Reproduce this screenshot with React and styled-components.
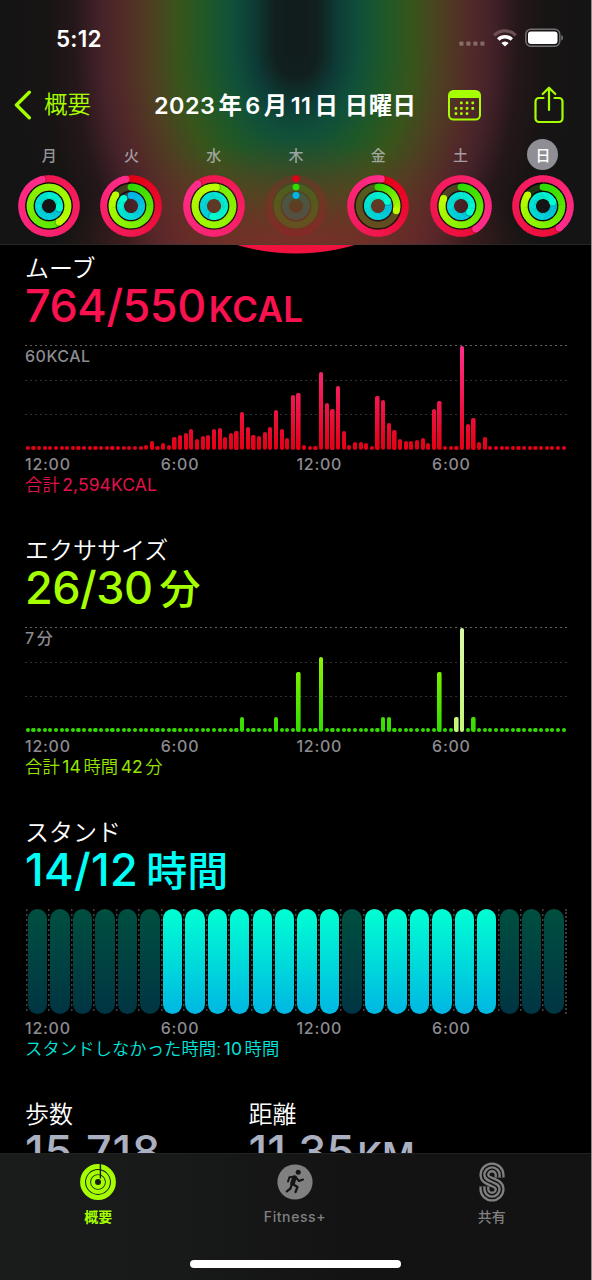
import styled, {createGlobalStyle} from "styled-components"

const GlobalStyle = createGlobalStyle`
    * {
        box-sizing: border-box;
    }

    body {
        margin: 0;
        background: #000;
    }
`

const Screen = styled.div`
    display: flex;
    flex-direction: column;
    width: 592px;
    height: 1280px;
    overflow: hidden;
    background: #000;
    border-right: 1px solid #8a8a8a;
    color: #fff;
    font-family: Inter, "Noto Sans CJK JP", sans-serif;
`

// the blurred rings behind the header: straight bands on top, curved below
const Header = styled.header`
    flex: none;
    display: flex;
    flex-direction: column;
    height: 245px;
    border-bottom: 1px solid rgba(80, 80, 80, 0.3);
    background:
        radial-gradient(ellipse 240px 125px at 296px 265px, rgba(134, 42, 42, 0.9) 0%, rgba(120, 46, 40, 0.6) 45%, rgba(100, 40, 45, 0) 100%),
        radial-gradient(
            ellipse 300px 400px at 296px 0,
            #111c1c 0%,
            #11201f 7%,
            #0d3c36 14%,
            #10503a 21%,
            #1f5827 30%,
            #38551b 39%,
            #4f3e22 49%,
            #522a28 58%,
            #45222a 65%,
            #241719 74%,
            #171414 84%,
            #141414 100%
        ) 0 50px / 100% 195px no-repeat,
        linear-gradient(
            to right,
            #141414 0,
            #171414 44px,
            #241719 74px,
            #45222a 101px,
            #522a28 122px,
            #4f3e22 149px,
            #38551b 179px,
            #1f5827 206px,
            #10503a 233px,
            #0d3c36 254px,
            #11201f 275px,
            #111c1c 296px,
            #11201f 317px,
            #0d3c36 338px,
            #10503a 359px,
            #1f5827 386px,
            #38551b 413px,
            #4f3e22 443px,
            #522a28 470px,
            #45222a 491px,
            #241719 518px,
            #171414 548px,
            #141414 592px
        );
`

const StatusBar = styled.div`
    display: flex;
    align-items: center;
    justify-content: space-between;
    height: 76px;
    padding: 0 27px 0 56px;
`

const Time = styled.span`
    font-size: 22.5px;
    font-weight: 600;
    letter-spacing: 0.2px;
`

const StatusIcons = styled.div`
    display: flex;
    align-items: center;
    gap: 8px;
`

const NavBar = styled.nav`
    display: grid;
    grid-template-columns: 140px 294px 85px 1fr;
    align-items: center;
    height: 58px;
    padding-left: 14px;
`

const BackLink = styled.a`
    display: flex;
    align-items: center;
    gap: 12px;
    color: #a6ff00;
    font-size: 23.5px;
    font-weight: 350;
    line-height: 30px;
`

const PageTitle = styled.h1`
    margin: 0;
    padding-top: 1px;
    display: flex;
    align-items: baseline;
    gap: 3px;
    font-size: 23.4px;
    line-height: 30px;
    font-weight: 600;
    letter-spacing: 0.5px;
    white-space: nowrap;
`

const Week = styled.div`
    display: grid;
    grid-template-columns: repeat(7, 82.3px);
    padding: 5px 0 0 8px;
`

const Day = styled.div`
    display: flex;
    flex-direction: column;
    align-items: center;
    gap: 5px;
`

const DayName = styled.span`
    display: flex;
    align-items: center;
    justify-content: center;
    width: 31px;
    height: 31px;
    border-radius: 50%;
    background: ${props => props.$active ? "#8f8e94" : "transparent"};
    color: ${props => props.$active ? "#fff" : "rgba(200, 200, 208, 0.72)"};
    font-size: 15px;
    font-weight: 500;
`

const Content = styled.main`
    position: relative;
    flex: 1;
    min-height: 0;
    overflow: hidden;
    padding: 9px 25px 0;
`

const RingEdge = styled.svg`
    position: absolute;
    top: 0;
    left: 236px;
    display: block;
`

const Section = styled.section`
    height: 282px;
`

const SectionTitle = styled.h2`
    margin: 0;
    height: 28px;
    line-height: 29px;
    font-size: 24px;
    font-weight: 350;
`

const Value = styled.div`
    display: flex;
    align-items: baseline;
    height: 63px;
    line-height: 47px;
    color: ${props => props.$color};
    font-size: 45px;
    font-weight: 500;
    letter-spacing: ${props => props.$spacing || "-0.5px"};
    white-space: nowrap;
`

const Unit = styled.span`
    margin-left: ${props => props.$gap || "3px"};
    font-size: ${props => props.$size || "35px"};
    font-weight: ${props => props.$size ? 500 : 600};
    letter-spacing: ${props => props.$size ? "0" : "0.3px"};
`

const Chart = styled.div`
    height: 105px;
    display: grid;
    margin-right: -1px;

    > * {
        grid-area: 1 / 1;
    }
`

const Grid = styled.div`
    display: flex;
    flex-direction: column;
    justify-content: space-between;
    height: 70px;
`

const GridLine = styled.div`
    height: 1px;
    background: repeating-linear-gradient(to right, ${props => props.$color} 0 2px, transparent 2px 5px);
`

const AxisMax = styled.span`
    display: flex;
    gap: 2px;
    padding-top: 3px;
    line-height: 16px;
    color: #8b8b90;
    font-size: 16px;
    font-weight: 500;
    letter-spacing: 0.5px;
`

const Bars = styled.div`
    display: grid;
    grid-template-columns: repeat(96, 5.65px);
    align-items: end;
    justify-items: center;
`

const Bar = styled.i`
    width: 4.2px;
    border-radius: 2px;
    background: linear-gradient(to top, ${props => props.$from}, ${props => props.$to}) bottom / 100% 104px no-repeat;
`

const StandBars = styled.div`
    display: grid;
    grid-template-columns: repeat(24, 22.46px);
    border-right: 2px dotted #3a3a3a;
`

const StandSlot = styled.div`
    display: flex;
    padding-left: 3px;
    background: repeating-linear-gradient(to bottom, #444 0 2px, transparent 2px 5px) left 1px top / 1.5px 100% no-repeat;
`

const StandBar = styled.i`
    width: 19.4px;
    border-radius: 10px;
    background: ${props => props.$on
        ? "linear-gradient(to bottom, #00ffd2, #00b7e3)"
        : "linear-gradient(to bottom, #004f40, #003543)"};
`

const Hours = styled.div`
    display: grid;
    grid-template-columns: repeat(4, 135.7px);
    height: 24px;
    padding-top: 4px;
    line-height: 20px;
    color: #8b8b90;
    font-size: 16px;
    font-weight: 500;
    letter-spacing: 0.75px;
`

const Total = styled.p`
    display: flex;
    gap: 2.5px;
    margin: 0;
    line-height: 22px;
    color: ${props => props.$color};
    font-size: 17.3px;
    font-weight: 350;
    letter-spacing: 0.1px;
    white-space: nowrap;
`

const Amount = styled.span`
    font-size: 17.5px;
    font-weight: 400;
`

const Stats = styled.div`
    display: grid;
    grid-template-columns: 223.5px 1fr;
`

const TabBar = styled.footer`
    flex: none;
    display: flex;
    flex-direction: column;
    align-items: center;
    justify-content: space-between;
    height: 127px;
    padding-bottom: 12px;
    border-top: 1px solid #202121;
    background: linear-gradient(to right, #1a1b1b 0, #181919 30%, #131313 60%, #131313);
`

const Tabs = styled.div`
    display: grid;
    grid-template-columns: repeat(3, 1fr);
    width: 100%;
    padding: 8px 1px 0 0;
`

const Tab = styled.div`
    display: flex;
    flex-direction: column;
    align-items: center;
    gap: 6px;
    color: ${props => props.$active ? "#a6ff00" : "#808080"};
    font-size: 14px;
    font-weight: ${props => props.$active ? 700 : 500};
    line-height: 18px;
    letter-spacing: ${props => props.$spacing || "0"};
`

const HomeIndicator = styled.div`
    width: 211px;
    height: 8px;
    border-radius: 4px;
    background: #fff;
`

const ringTypes = [
    {r: 27.3, from: [227, 0, 20], to: [255, 45, 140]},
    {r: 18.9, from: [48, 220, 0], to: [190, 255, 0]},
    {r: 10.5, from: [0, 182, 230], to: [0, 255, 208]},
]

const week = [
    {name: "月", rings: [1.96, 1.41, 1.28]},
    {name: "火", rings: [0.97, 0.85, 0.88]},
    {name: "水", rings: [1.9, 2.02, 1.52]},
    {name: "木", rings: [0, 0, 0]},
    {name: "金", rings: [1.02, 0.29, 1.18]},
    {name: "土", rings: [1.41, 0.815, 1.35]},
    {name: "日", rings: [1.4, 0.85, 1.19], active: true},
]

const dots = n => Array(n).fill(4)

const moveData = [
    ...dots(21), 4.7, 9, 4, 7, 5, 12.7, 15, 17.5, 20.7, 11, 14, 15, 20.7, 22, 12.7, 16.7, 19,
    37.7, 22.7, 15, 14, 17.7, 23, 39.7, 21, 11.7, 55, 57, 5, 4, 4, 77.7, 46.7, 41.3, 63.7,
    18.7, 5.3, 8.3, 7.7, 7, 4, 54, 49.7, 26.7, 20, 11.3, 9, 9, 9.7, 12, 7, 41.3, 48.7,
    4, 4, 4, 104.3, 26.3, 32, 8.3, 13, ...dots(14),
]

const exerciseData = dots(96)
Object.assign(exerciseData, {38: 15, 44: 15, 48: 60, 52: 74.7, 63: 15, 64: 15, 73: 60, 76: 15, 77: 104.5, 79: 15})

const workout = [76, 77]

const standData = "000000111111110111111000".split("").map(Number)

const mix = (a, b, t) => `rgb(${a.map((v, i) => Math.round(v + (b[i] - v) * t)).join(",")})`

const point = (r, turn) => {
    const a = turn * Math.PI * 2
    return [31 + r * Math.sin(a), 31 - r * Math.cos(a)]
}

const Ring = ({type, value}) => {
    const {r, from, to} = type
    const steps = Math.ceil(value * 60)
    // only the last lap stays visible
    const start = Math.max(0, steps - 61)
    const [ex, ey] = point(r, value)
    const [sx, sy] = point(r, value + 0.17 / r)
    return (
        <g>
            <circle cx="31" cy="31" r={r} fill="none" stroke={mix(from, to, 0.2)} strokeOpacity="0.16" strokeWidth="6.9" />
            {value < 1 && <circle cx="31" cy={31 - r} r="3.4" fill={mix(from, to, 0)} />}
            {Array.from({length: steps - start}, (_, k) => {
                const i = k + start
                const [x1, y1] = point(r, i * value / steps)
                const [x2, y2] = point(r, Math.min(i + 1.3, steps) * value / steps)
                return (
                    <path
                        key={i}
                        d={`M${x1} ${y1}A${r} ${r} 0 0 1 ${x2} ${y2}`}
                        fill="none"
                        stroke={mix(from, to, i / steps)}
                        strokeWidth="6.9"
                    />
                )
            })}
            {value > 1 && <circle cx={sx} cy={sy} r="3.4" fill="#000" opacity="0.22" />}
            {value > 0 && <circle cx={ex} cy={ey} r="3.45" fill={mix(from, to, 1)} />}
        </g>
    )
}

const Rings = ({values}) => (
    <svg width="62" height="62" viewBox="0 0 62 62">
        {values.some(v => v > 0) && [23.1, 14.7].map(r => (
            <circle key={r} cx="31" cy="31" r={r} fill="none" stroke="#000" strokeOpacity="0.6" strokeWidth="2" />
        ))}
        {ringTypes.map((type, i) => <Ring key={i} type={type} value={values[i]} />)}
    </svg>
)

const SignalIcon = () => (
    <svg width="26" height="20" viewBox="0 0 26 20" fill="#fff" fillOpacity="0.3">
        {[0, 7, 14, 21].map(x => <rect key={x} x={x + 0.3} y="13.6" width="4.2" height="4.2" rx="1" />)}
    </svg>
)

const WifiIcon = () => (
    <svg width="24" height="20" viewBox="0 0 24 20" fill="none" stroke="#fff" strokeWidth="3.4">
        <path d="M1.2 7.3a15.3 15.3 0 0 1 21.6 0" stroke="#6d5054" strokeWidth="3.2" />
        <path d="M5.2 11.5a9.6 9.6 0 0 1 13.6 0" />
        <path d="M12 18.6L8.3 15a5.3 5.3 0 0 1 7.4 0z" fill="#fff" stroke="none" />
    </svg>
)

const BatteryIcon = () => (
    <svg width="39" height="20" viewBox="0 0 39 20">
        <rect x="0.8" y="1.2" width="34" height="17" rx="5" fill="none" stroke="#fff" strokeOpacity="0.4" strokeWidth="1.4" />
        <rect x="3" y="3.5" width="29.5" height="12.5" rx="3" fill="#fff" />
        <path d="M36.3 7v5.6c2.2-.7 2.2-4.9 0-5.6z" fill="#fff" fillOpacity="0.45" />
    </svg>
)

const BackIcon = () => (
    <svg width="18" height="30" viewBox="0 0 18 30" fill="none" stroke="#a6ff00" strokeWidth="3.4" strokeLinecap="round" strokeLinejoin="round">
        <path d="M15.3 2.3L2.5 15l12.8 12.7" />
    </svg>
)

const calendarDots = [[13, 12.6], [18.7, 12.6], [24.4, 12.6], [7.6, 18], [13, 18], [18.7, 18], [24.4, 18], [7.6, 23.2], [13, 23.2], [18.7, 23.2]]

const CalendarIcon = () => (
    <svg width="33" height="31" viewBox="0 0 33 31" fill="#a6ff00">
        <rect x="1" y="1" width="31" height="28.6" rx="4.5" fill="none" stroke="#a6ff00" strokeWidth="2" />
        <path d="M1 8V5.5A4.5 4.5 0 0 1 5.5 1h22A4.5 4.5 0 0 1 32 5.5V8z" />
        {calendarDots.map(([x, y]) => <rect key={`${x}-${y}`} x={x - 1} y={y - 1} width="2.7" height="2.7" rx="0.8" />)}
    </svg>
)

const ShareIcon = () => (
    <svg width="32" height="38" viewBox="0 0 32 38" fill="none" stroke="#a6ff00" strokeWidth="2.2" strokeLinecap="round" strokeLinejoin="round">
        <path d="M10.5 12H6a3.5 3.5 0 0 0-3.5 3.5v17A3.5 3.5 0 0 0 6 36h20a3.5 3.5 0 0 0 3.5-3.5v-17A3.5 3.5 0 0 0 26 12h-4.5" />
        <path d="M16 24V2M9.7 8L16 1.7 22.3 8" />
    </svg>
)

const SummaryIcon = () => (
    <svg width="40" height="40" viewBox="0 0 40 40" fill="none" stroke="#a6ff00">
        <circle cx="20" cy="20" r="15.4" strokeWidth="5" />
        <circle cx="20" cy="20" r="9.9" strokeWidth="4.1" />
        <circle cx="20" cy="20" r="5" strokeWidth="4" />
        <path d="M22.4 2v14.5" stroke="#191a1a" strokeWidth="1.4" />
    </svg>
)

const FitnessIcon = () => (
    <svg width="40" height="40" viewBox="0 0 40 40" fill="none" stroke="#151515" strokeLinecap="round" strokeLinejoin="round">
        <circle cx="20" cy="20" r="17.6" fill="#808080" stroke="none" />
        <circle cx="23.2" cy="10.3" r="2.5" fill="#151515" stroke="none" />
        <path d="M19.5 15.5L17.5 21.5" strokeWidth="4.6" />
        <path d="M18.5 14.7L14.5 15.2L13 19.5M21 15.5L24 19L28 17.5" strokeWidth="2" />
        <path d="M18.5 22.5L22.5 25L20.5 30M16.7 22.5L15.5 26.5L11.8 29.3" strokeWidth="2.3" />
    </svg>
)

const sPath = "M7.6-4.5V-7A7.6 7.6 0 0 0-7.6-7C-7.6 1 7.6-1 7.6 7A7.6 7.6 0 0 1-7.6 7V4.5"

const SharingIcon = () => (
    <svg width="40" height="40" viewBox="-20 -20 40 40" fill="none">
        <path d={sPath} stroke="#808080" strokeWidth="10" />
        <path d={sPath} stroke="#131313" strokeWidth="5.4" />
        <path d={sPath} stroke="#808080" strokeWidth="2.4" />
    </svg>
)

const HourLabels = () => (
    <Hours>
        <span>12:00</span>
        <span>6:00</span>
        <span>12:00</span>
        <span>6:00</span>
    </Hours>
)

const BarChart = ({data, max, from, to, highlight = []}) => (
    <Chart>
        <Grid>
            <GridLine $color="#606060" />
            <GridLine $color="#303030" />
            <GridLine $color="#303030" />
        </Grid>
        <AxisMax>{max}</AxisMax>
        <Bars>
            {data.map((h, i) => (
                <Bar
                    key={i}
                    $from={highlight.includes(i) ? "#c4f57a" : from}
                    $to={highlight.includes(i) ? "#dcfaa8" : to}
                    style={{height: h}}
                />
            ))}
        </Bars>
    </Chart>
)

const App = () => {
    return (
        <>
            <GlobalStyle />
            <Screen>
                <Header>
                    <StatusBar>
                        <Time>5:12</Time>
                        <StatusIcons>
                            <SignalIcon />
                            <WifiIcon />
                            <BatteryIcon />
                        </StatusIcons>
                    </StatusBar>
                    <NavBar>
                        <BackLink>
                            <BackIcon />
                            概要
                        </BackLink>
                        <PageTitle>
                            <span>2023</span><span>年</span><span>6</span><span>月</span><span>11</span><span>日 日曜日</span>
                        </PageTitle>
                        <CalendarIcon />
                        <ShareIcon />
                    </NavBar>
                    <Week>
                        {week.map(day => (
                            <Day key={day.name}>
                                <DayName $active={day.active}>{day.name}</DayName>
                                <Rings values={day.rings} />
                            </Day>
                        ))}
                    </Week>
                </Header>
                <Content>
                    <RingEdge width="120" height="9" viewBox="0 0 120 9">
                        <circle cx="60" cy="-200.5" r="209" fill="#f2123f" />
                    </RingEdge>
                    <Section>
                        <SectionTitle>ムーブ</SectionTitle>
                        <Value $color="#fa114f">764/550<Unit>KCAL</Unit></Value>
                        <BarChart data={moveData} max="60KCAL" from="#e30013" to="#ff2f8c" />
                        <HourLabels />
                        <Total $color="#e0114a"><span>合計</span><Amount>2,594KCAL</Amount></Total>
                    </Section>
                    <Section>
                        <SectionTitle>エクササイズ</SectionTitle>
                        <Value $color="#a6ff00">26/30<Unit $size="41px" $gap="7px">分</Unit></Value>
                        <BarChart data={exerciseData} max={<><span>7</span><span>分</span></>} from="#30dc00" to="#b0ff00" highlight={workout} />
                        <HourLabels />
                        <Total $color="#96e600"><span>合計</span><Amount>14</Amount><span>時間</span><Amount>42</Amount><span>分</span></Total>
                    </Section>
                    <Section>
                        <SectionTitle>スタンド</SectionTitle>
                        <Value $color="#00fff6" $spacing="0.4px">14/12<Unit $size="41px" $gap="8px">時間</Unit></Value>
                        <Chart>
                            <StandBars>
                                {standData.map((on, i) => (
                                    <StandSlot key={i}>
                                        <StandBar $on={on} />
                                    </StandSlot>
                                ))}
                            </StandBars>
                        </Chart>
                        <HourLabels />
                        <Total $color="#00e6dc"><span>スタンドしなかった時間:</span><Amount>10</Amount><span>時間</span></Total>
                    </Section>
                    <Stats>
                        <div>
                            <SectionTitle>歩数</SectionTitle>
                            <Value $color="#aab0c0" $spacing="0.9px">15,718</Value>
                        </div>
                        <div>
                            <SectionTitle>距離</SectionTitle>
                            <Value $color="#aab0c0" $spacing="0">11.35<Unit>KM</Unit></Value>
                        </div>
                    </Stats>
                </Content>
                <TabBar>
                    <Tabs>
                        <Tab $active><SummaryIcon />概要</Tab>
                        <Tab $spacing="0.6px"><FitnessIcon />Fitness+</Tab>
                        <Tab><SharingIcon />共有</Tab>
                    </Tabs>
                    <HomeIndicator />
                </TabBar>
            </Screen>
        </>
    )
}

export default App;
